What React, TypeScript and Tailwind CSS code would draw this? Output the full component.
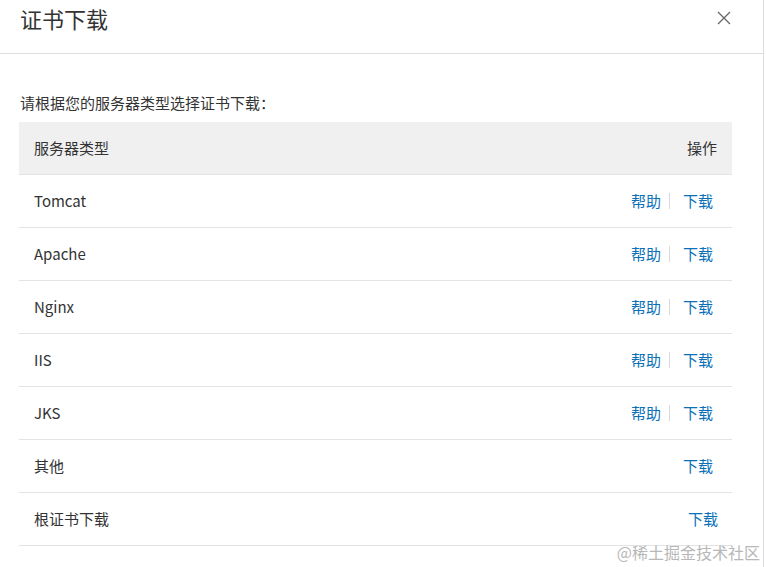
import React from 'react';

const rows: { name: string; help: boolean; wide?: boolean }[] = [
  { name: 'Tomcat', help: true },
  { name: 'Apache', help: true },
  { name: 'Nginx', help: true },
  { name: 'IIS', help: true },
  { name: 'JKS', help: true },
  { name: '其他', help: false },
  { name: '根证书下载', help: false, wide: true },
];

const font = { fontFamily: '"Noto Sans CJK SC", "Liberation Sans", sans-serif' };

export default function App() {
  return (
    <div className="relative w-[766px] h-[567px] overflow-hidden bg-white text-[#333]" style={font}>
      <div className="w-[764px] h-full border-r border-[#dcdcdc]">
        <div className="h-[54px] border-b border-[#dedede] flex items-start justify-between pl-[20px] pr-[32px]">
          <h1 className="text-[22px] leading-[36px] text-[#333]">证书下载</h1>
          <button className="mt-[11px] text-[#666]">
            <svg width="14" height="14" viewBox="0 0 14 14" fill="none" stroke="currentColor" strokeWidth="1.3">
              <path d="M1 1L13 13M13 1L1 13" />
            </svg>
          </button>
        </div>

        <div className="pl-[19px] pr-[31px]">
          <p className="mt-[38px] pl-[1px] text-[15px] leading-[22px] text-[#333]">请根据您的服务器类型选择证书下载：</p>
          <div className="mt-[8px]">
            <div className="h-[53px] bg-[#f0f0f0] border-b border-[#e3e3e3] flex items-center justify-between px-[15px] text-[15px]">
              <span>服务器类型</span>
              <span>操作</span>
            </div>
            {rows.map((r) => (
              <div
                key={r.name}
                className="h-[53px] border-b border-[#e3e3e3] flex items-center justify-between pl-[15px] text-[15px]"
              >
                <span>{r.name}</span>
                <div className={`flex items-center text-[#0a70b8] ${r.wide ? 'pr-[14px]' : 'pr-[19px]'}`}>
                  {r.help && (
                    <>
                      <a className="cursor-pointer">帮助</a>
                      <span className="ml-[8px] mr-[13px] h-[16px] w-px bg-[#d9d9d9]" />
                    </>
                  )}
                  <a className="cursor-pointer">下载</a>
                </div>
              </div>
            ))}
          </div>
        </div>
      </div>
      <div className="absolute right-[6px] bottom-[4px] text-[16px] text-[#b8b8b8] leading-[22px]">@稀土掘金技术社区</div>
    </div>
  );
}
